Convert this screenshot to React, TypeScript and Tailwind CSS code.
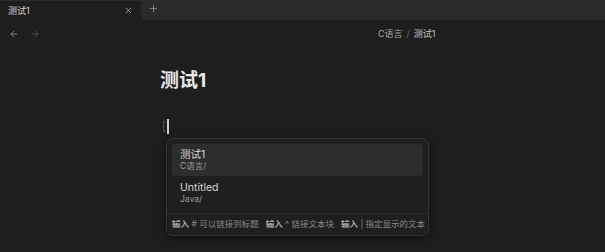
import React from 'react';
import { ArrowLeft, ArrowRight, X, Plus } from 'lucide-react';

const font = { fontFamily: '"Inter", "Noto Sans CJK SC", sans-serif' };

const items = [
  { title: '测试1', path: 'C语言/', active: true },
  { title: 'Untitled', path: 'Java/', active: false },
];

const hints = [
  { key: '输入', text: '# 可以链接到标题' },
  { key: '输入', text: '^ 链接文本块' },
  { key: '输入', text: '| 指定显示的文本' },
];

export default function App() {
  return (
    <div className="w-[605px] h-[252px] bg-[#1e1e1e] overflow-hidden text-[#dadada]" style={font}>
      {/* tab bar */}
      <div className="flex h-5 bg-[#1e1e1e] border-t border-[#2b2b2b]">
        <div className="w-[141px] flex items-center justify-between pl-2 pr-[8px]">
          <span className="text-[9px] text-[#d4d4d4]">测试1</span>
          <X size={9} strokeWidth={2} className="text-[#bdbdbd]" />
        </div>
        <div className="flex-1 bg-[#2b2b2b] rounded-bl-md flex items-start pl-[7px] pt-[2px]">
          <Plus size={11} strokeWidth={1.6} className="text-[#9a9a9a]" />
        </div>
      </div>

      {/* nav row */}
      <div className="flex items-center h-[28px]">
        <div className="flex items-center gap-[11px] pl-[9px] w-[378px]">
          <ArrowLeft size={10} strokeWidth={1.8} className="text-[#9c9c9c]" />
          <ArrowRight size={10} strokeWidth={1.8} className="text-[#5c5c5c]" />
        </div>
        <div className="text-[9px] text-[#a6a6a6] flex items-center gap-[4px]">
          <span>C语言</span>
          <span className="text-[#6a6a6a]">/</span>
          <span className="text-[#c4c4c4]">测试1</span>
        </div>
      </div>

      {/* editor */}
      <div className="pl-[160px]">
        <h1 className="mt-[20px] text-[19px] leading-[26px] font-bold text-[#e8e8e8]">测试1</h1>

        <div className="mt-[24px] h-[16px] flex items-center pl-[2px]">
          <span className="text-[11px] text-[#5a5a5a] leading-none">[</span>
          <span className="w-[1.5px] h-[15px] bg-[#cfcfcf] ml-[1px]"></span>
        </div>

        <div className="mt-[4px] ml-[6px] w-[263px] rounded-[7px] border border-[#353535] bg-[#1f1f1f] shadow-[0_2px_8px_rgba(0,0,0,0.5)]">
          <div className="px-[5px] pt-[5px] pb-[4px] flex flex-col gap-[1px]">
            {items.map((it) => (
              <div
                key={it.title}
                className={
                  it.active
                    ? 'h-[32px] rounded-[4px] bg-[#2d2d2d] pl-[8px] flex flex-col justify-center'
                    : 'h-[32px] rounded-[4px] pl-[8px] flex flex-col justify-center'
                }
              >
                <div className="text-[10.5px] leading-[13px] text-[#d6d6d6]">{it.title}</div>
                <div className="text-[8.5px] leading-[11px] text-[#9b9b9b]">{it.path}</div>
              </div>
            ))}
          </div>
          <div className="border-t border-[#2d2d2d] h-[22px] flex items-center gap-[7px] pl-[5px] text-[8.5px]">
            {hints.map((h, i) => (
              <span key={i} className="whitespace-nowrap">
                <span className="font-bold text-[#a8a8a8]">{h.key}</span>
                <span className="text-[#888888]"> {h.text}</span>
              </span>
            ))}
          </div>
        </div>
      </div>
    </div>
  );
}
